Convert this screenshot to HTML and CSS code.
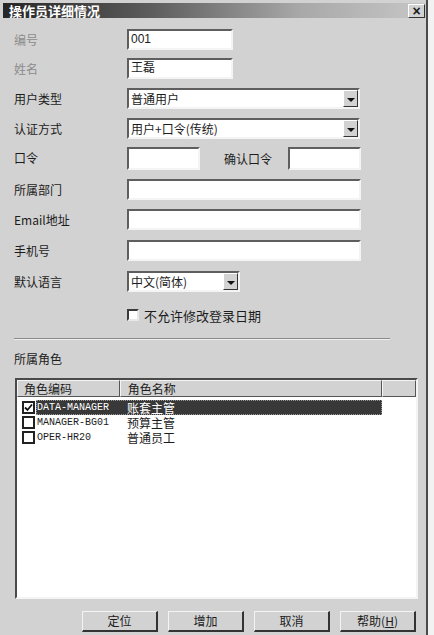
FILE: index.html
```html
<!DOCTYPE html>
<html lang="zh-CN">
<head>
<meta charset="UTF-8">
<title>操作员详细情况</title>
<link rel="stylesheet" href="styles.css">
</head>
<body>
<div class="window">
  <div class="titlebar">
    <span class="title">操作员详细情况</span>
    <span class="close">×</span>
  </div>

  <div class="form">
    <div class="lbl dim">编号</div>
    <div class="field"><span class="edit short">001</span></div>

    <div class="lbl dim">姓名</div>
    <div class="field"><span class="edit short">王磊</span></div>

    <div class="lbl">用户类型</div>
    <div class="field"><span class="combo long"><span class="val">普通用户</span><span class="drop"></span></span></div>

    <div class="lbl">认证方式</div>
    <div class="field"><span class="combo long"><span class="val">用户+口令(传统)</span><span class="drop"></span></span></div>

    <div class="lbl">口令</div>
    <div class="field pair">
      <span class="edit tiny tall"></span>
      <span class="lbl confirm">确认口令</span>
      <span class="edit tiny tall"></span>
    </div>

    <div class="lbl">所属部门</div>
    <div class="field"><span class="edit wide"></span></div>

    <div class="lbl">Email地址</div>
    <div class="field"><span class="edit wide"></span></div>

    <div class="lbl">手机号</div>
    <div class="field"><span class="edit wide"></span></div>

    <div class="lbl">默认语言</div>
    <div class="field"><span class="combo lang"><span class="val">中文(简体)</span><span class="drop"></span></span></div>
  </div>

  <div class="check-row">
    <span class="box"></span>
    <span>不允许修改登录日期</span>
  </div>

  <div class="separator"></div>

  <div class="section">所属角色</div>

  <div class="listbox">
    <div class="list-head">
      <span class="col code">角色编码</span>
      <span class="col name">角色名称</span>
      <span class="col rest"></span>
    </div>
    <div class="list-row">
      <span class="box big"><svg width="9" height="9" viewBox="0 0 9 9"><path d="M1 4.5 L3.5 7 L8 1.5" fill="none" stroke="#111" stroke-width="1.8"/></svg></span>
      <span class="item selected"><span class="c">DATA-MANAGER</span><span class="n">账套主管</span></span>
    </div>
    <div class="list-row">
      <span class="box big"></span>
      <span class="item"><span class="c">MANAGER-BG01</span><span class="n">预算主管</span></span>
    </div>
    <div class="list-row">
      <span class="box big"></span>
      <span class="item"><span class="c">OPER-HR20</span><span class="n">普通员工</span></span>
    </div>
  </div>

  <div class="buttons">
    <span class="btn">定位</span>
    <span class="btn">增加</span>
    <span class="btn">取消</span>
    <span class="btn">帮助(<u>H</u>)</span>
  </div>
</div>
</body>
</html>
```

FILE: styles.css
```css
body {
  margin: 0;
  background: #f2f2f2;
  font-family: "Noto Sans CJK SC", "Liberation Sans", sans-serif;
  font-size: 12px;
  color: #1c1c1c;
}

.window {
  width: 426px;
  height: 635px;
  background: #d2d2d2;
  border-right: 2px solid #4a4a4a;
  display: flex;
  flex-direction: column;
}

.titlebar {
  margin: 3px 0 0 3px;
  height: 15px;
  display: flex;
  align-items: center;
  justify-content: space-between;
  background: linear-gradient(to right, #262626 0%, #5c5c5c 35%, #a8a8a8 70%, #c6c6c6 100%);
}
.title {
  color: #fff;
  font-weight: bold;
  font-size: 13px;
  padding-left: 6px;
  line-height: 15px;
}
.close {
  width: 15px;
  height: 12px;
  margin-right: 1px;
  background: #d2d2d2;
  border: 1px solid;
  border-color: #fff #333 #333 #fff;
  display: flex;
  align-items: center;
  justify-content: center;
  font-family: "Liberation Sans", sans-serif;
  font-weight: bold;
  font-size: 14px;
  line-height: 12px;
}

.form {
  display: grid;
  grid-template-columns: 113px 1fr;
  grid-template-rows: 29px 30px 30px 29px 32px 30px 31px 31px 30px;
  padding-left: 14px;
  margin-top: 11px;
}
.lbl {
  height: 21px;
  line-height: 21px;
  white-space: nowrap;
}
.dim { color: #8c8c8c; }
.field {
  display: flex;
  align-items: flex-start;
}
.pair .confirm {
  margin: 0 16px 0 24px;
  height: 23px;
  line-height: 23px;
}

.edit {
  box-sizing: border-box;
  height: 21px;
  background: #fff;
  border: 2px solid;
  border-color: #5e5e5e #f4f4f4 #f4f4f4 #5e5e5e;
  padding-left: 2px;
  line-height: 17px;
  font-family: "Liberation Sans", "Noto Sans CJK SC", sans-serif;
}
.short { width: 106px; }
.tiny { width: 73px; }
.tall { height: 23px; }
.wide { width: 234px; }

.combo {
  box-sizing: border-box;
  height: 21px;
  background: #fff;
  border: 2px solid;
  border-color: #5e5e5e #f4f4f4 #f4f4f4 #5e5e5e;
  display: flex;
  align-items: stretch;
}
.long { width: 233px; }
.lang { width: 113px; }
.combo .val {
  flex: 1;
  padding-left: 2px;
  line-height: 17px;
}
.drop {
  width: 13px;
  background: #d2d2d2;
  border: 1px solid;
  border-color: #fff #333 #333 #fff;
  display: flex;
  align-items: center;
  justify-content: center;
}
.drop::after {
  content: "";
  border-left: 4px solid transparent;
  border-right: 4px solid transparent;
  border-top: 4px solid #111;
  margin-top: 2px;
}

.check-row {
  margin: 7px 0 0 127px;
  display: flex;
  align-items: center;
  gap: 5px;
  font-size: 13px;
  height: 14px;
}
.box {
  box-sizing: border-box;
  width: 12px;
  height: 12px;
  background: #fff;
  border: 2px solid;
  border-color: #3a3a3a #e8e8e8 #e8e8e8 #3a3a3a;
  display: flex;
  align-items: center;
  justify-content: center;
  flex-shrink: 0;
}
.box.big {
  width: 13px;
  height: 13px;
  border-color: #222;
}

.separator {
  margin: 16px 0 0 14px;
  width: 376px;
  border-top: 1px solid #8a8a8a;
  border-bottom: 1px solid #f0f0f0;
}

.section {
  margin: 10px 0 0 14px;
  height: 18px;
  line-height: 18px;
}

.listbox {
  box-sizing: border-box;
  margin: 10px 0 0 15px;
  width: 403px;
  height: 221px;
  background: #fff;
  border: 2px solid;
  border-color: #4a4a4a #f4f4f4 #f4f4f4 #4a4a4a;
}
.list-head {
  display: flex;
  height: 17px;
}
.col {
  box-sizing: border-box;
  background: #d2d2d2;
  border: 1px solid;
  border-color: #f4f4f4 #555 #555 #f4f4f4;
  line-height: 15px;
  padding-left: 6px;
}
.col.code { width: 103px; }
.col.name { width: 263px; padding-left: 7px; }
.col.rest { width: 34px; }
.list-head + .list-row { margin-top: 3px; }
.list-row {
  display: flex;
  align-items: center;
  height: 15px;
  line-height: 15px;
  padding-left: 5px;
  gap: 1px;
}
.item {
  box-sizing: border-box;
  display: flex;
  height: 15px;
  align-items: center;
  padding-left: 1px;
  width: 346px;
}
.item .c {
  width: 90px;
  font-family: "Liberation Mono", monospace;
  font-size: 10px;
  line-height: 15px;
}
.item .n {
  font-size: 12px;
  line-height: 15px;
}
.selected {
  background: #383838;
  color: #fff;
  outline: 1px dotted #999;
  outline-offset: -1px;
}

.buttons {
  margin-top: 12px;
  display: flex;
  justify-content: flex-end;
  gap: 10px;
  padding-right: 10px;
}
.btn {
  box-sizing: border-box;
  width: 76px;
  height: 21px;
  background: #d2d2d2;
  border-style: solid;
  border-width: 1px 2px 2px 1px;
  border-color: #f4f4f4 #333 #333 #f4f4f4;
  text-align: center;
  line-height: 18px;
}
```
